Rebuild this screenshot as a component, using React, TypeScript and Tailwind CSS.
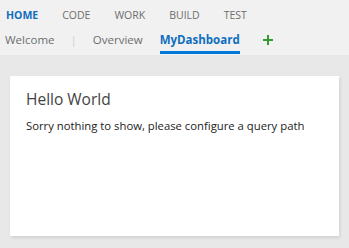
import React from "react";

const hubs = ["HOME", "CODE", "WORK", "BUILD", "TEST"];

export default function App() {
  return (
    <div
      className="w-[349px] h-[248px] bg-[#e8e8e8] overflow-hidden"
      style={{ fontFamily: '"Open Sans", "Noto Sans", sans-serif' }}
    >
      <div className="bg-[#f1f1f1] h-[55px] pl-[6px]">
        <div className="flex gap-[24px] pt-[8px] h-[31px] text-[10.5px] leading-[15px] text-[#6d6d6d]">
          {hubs.map((h, i) => (
            <span key={h} className={i === 0 ? "font-bold text-[#106ebe]" : ""}>
              {h}
            </span>
          ))}
        </div>
        <div className="flex items-start text-[11.5px] leading-[18px] text-[#6d6d6d]">
          <span className="-ml-[1px]">Welcome</span>
          <span className="ml-[16px] text-[#cfcfcf]">|</span>
          <span className="ml-[16px]">Overview</span>
          <div className="ml-[17px] flex flex-col">
            <span className="font-bold text-[#106ebe]">MyDashboard</span>
            <div className="h-[3px] bg-[#0078d7] mt-[2px]" />
          </div>
          <svg className="ml-[23px] mt-[4px]" width="10" height="10" viewBox="0 0 10 10">
            <path d="M5 0v10M0 5h10" stroke="#339933" strokeWidth="2" />
          </svg>
        </div>
      </div>
      <div className="px-[10px] pt-[21px]">
        <div className="bg-white h-[160px] shadow-[1px_2px_3px_rgba(0,0,0,0.1)] px-[16px] pt-[13px]">
          <div className="text-[15.5px] leading-[20px] text-[#444]">Hello World</div>
          <div className="mt-[9px] text-[11.3px] leading-[16px] text-[#222]">
            Sorry nothing to show, please configure a query path
          </div>
        </div>
      </div>
    </div>
  );
}
